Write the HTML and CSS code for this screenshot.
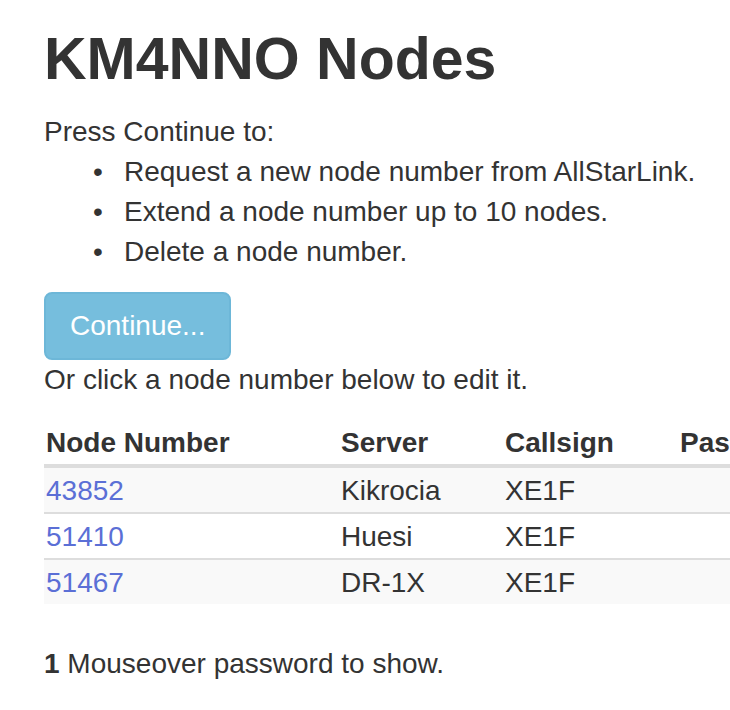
FILE: index.html
```html
<!DOCTYPE html>
<html lang="en">
<head>
    <meta charset="UTF-8">
    <meta name="viewport" content="width=device-width, initial-scale=1.0">
    <title>KM4NNO Nodes</title>
    <link rel="stylesheet" href="styles.css">
</head>
<body>
    <div class="container">
        <h1>KM4NNO Nodes</h1>
        <p class="intro">Press Continue to:</p>
        <ul class="actions">
            <li>Request a new node number from AllStarLink.</li>
            <li>Extend a node number up to 10 nodes.</li>
            <li>Delete a node number.</li>
        </ul>
        <button type="button" class="btn btn-info" disabled>Continue...</button>
        <p class="hint">Or click a node number below to edit it.</p>

        <table class="nodes">
            <thead>
                <tr>
                    <th class="col-node">Node Number</th>
                    <th class="col-server">Server</th>
                    <th class="col-call">Callsign</th>
                    <th class="col-pass">Password <sup>1</sup></th>
                </tr>
            </thead>
            <tbody>
                <tr>
                    <td><a href="#">43852</a></td>
                    <td>Kikrocia</td>
                    <td>XE1F</td>
                    <td></td>
                </tr>
                <tr>
                    <td><a href="#">51410</a></td>
                    <td>Huesi</td>
                    <td>XE1F</td>
                    <td></td>
                </tr>
                <tr>
                    <td><a href="#">51467</a></td>
                    <td>DR-1X</td>
                    <td>XE1F</td>
                    <td></td>
                </tr>
            </tbody>
        </table>

        <p class="note"><strong>1</strong> Mouseover password to show.</p>
    </div>
</body>
</html>
```

FILE: styles.css
```css
html, body {
    margin: 0;
    overflow: hidden;
}

body {
    font-family: "Liberation Sans", Arial, sans-serif;
    font-size: 28px;
    line-height: 40px;
    color: #333333;
    background-color: #ffffff;
}

.container {
    padding: 26px 0 0 44px;
    width: 1200px;
}

h1 {
    font-size: 59px;
    font-weight: bold;
    line-height: 66px;
    margin: 0 0 20px 0;
}

p {
    margin: 0;
}

/* list of actions */
.actions {
    margin: 0 0 20px 0;
    padding-left: 80px;
    list-style: none;
}

.actions li::before {
    content: "\2022";
    display: inline-block;
    width: 31px;
    margin-left: -31px;
}

/* the continue button */
.btn {
    font-family: inherit;
    font-size: 28px;
    line-height: 40px;
    padding: 12px 24px;
    border-radius: 8px;
    border: 2px solid #6db7d8;
    background-color: #76bedd;
    color: #ffffff;
    cursor: not-allowed;
    display: block;
}

.hint {
    margin-bottom: 20px;
}

/* node table */
.nodes {
    border-collapse: collapse;
    border-spacing: 0;
    margin-bottom: 40px;
}

.nodes th,
.nodes td {
    text-align: left;
    padding: 3px 2px 1px 2px;
    vertical-align: top;
}

.nodes th {
    border-bottom: 4px solid #dddddd;
}

.nodes td {
    border-top: 2px solid #dddddd;
}

.nodes tbody tr:first-child td {
    border-top: none;
}

.nodes tbody tr:nth-child(odd) {
    background-color: #f9f9f9;
}

.col-node { width: 291px; }
.col-server { width: 160px; }
.col-call { width: 171px; }
.col-pass { width: 300px; }

.nodes sup {
    font-size: 18px;
    line-height: 0;
}

a {
    color: #5b6fd6;
    text-decoration: none;
}
```
